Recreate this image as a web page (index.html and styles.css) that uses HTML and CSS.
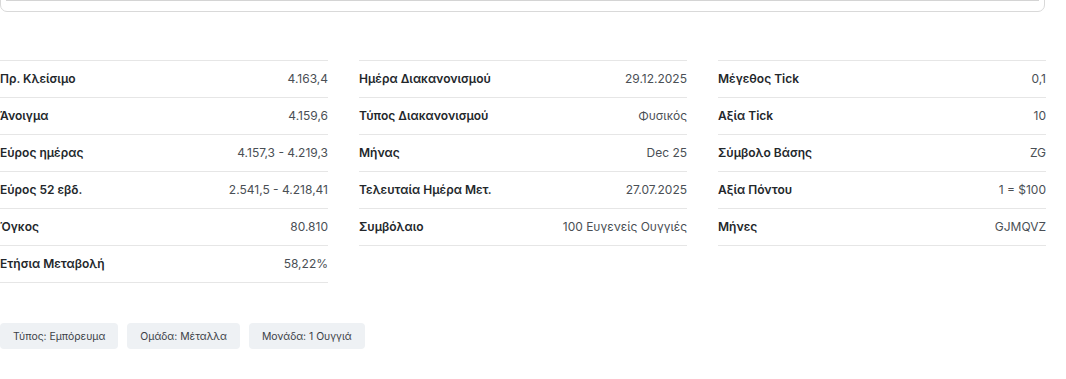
FILE: index.html
```html
<!DOCTYPE html>
<html lang="el">
<head>
<meta charset="utf-8">
<link rel="stylesheet" href="styles.css">
</head>
<body>
<div class="page">
  <div class="topbox"><div class="topinner"></div></div>
  <div class="grid">
    <div class="col">
      <div class="row"><span class="lbl">Πρ. Κλείσιμο</span><span class="val">4.163,4</span></div>
      <div class="row"><span class="lbl">Άνοιγμα</span><span class="val">4.159,6</span></div>
      <div class="row"><span class="lbl">Εύρος ημέρας</span><span class="val">4.157,3 - 4.219,3</span></div>
      <div class="row"><span class="lbl">Εύρος 52 εβδ.</span><span class="val">2.541,5 - 4.218,41</span></div>
      <div class="row"><span class="lbl">Όγκος</span><span class="val">80.810</span></div>
      <div class="row"><span class="lbl">Ετήσια Μεταβολή</span><span class="val">58,22%</span></div>
    </div>
    <div class="col">
      <div class="row"><span class="lbl">Ημέρα Διακανονισμού</span><span class="val">29.12.2025</span></div>
      <div class="row"><span class="lbl">Τύπος Διακανονισμού</span><span class="val">Φυσικός</span></div>
      <div class="row"><span class="lbl">Μήνας</span><span class="val">Dec 25</span></div>
      <div class="row"><span class="lbl">Τελευταία Ημέρα Μετ.</span><span class="val">27.07.2025</span></div>
      <div class="row"><span class="lbl">Συμβόλαιο</span><span class="val">100 Ευγενείς Ουγγιές</span></div>
    </div>
    <div class="col">
      <div class="row"><span class="lbl">Μέγεθος Tick</span><span class="val">0,1</span></div>
      <div class="row"><span class="lbl">Αξία Tick</span><span class="val">10</span></div>
      <div class="row"><span class="lbl">Σύμβολο Βάσης</span><span class="val">ZG</span></div>
      <div class="row"><span class="lbl">Αξία Πόντου</span><span class="val">1 = $100</span></div>
      <div class="row"><span class="lbl">Μήνες</span><span class="val">GJMQVZ</span></div>
    </div>
  </div>
  <div class="tags">
    <span class="tag">Τύπος: Εμπόρευμα</span>
    <span class="tag">Ομάδα: Μέταλλα</span>
    <span class="tag">Μονάδα: 1 Ουγγιά</span>
  </div>
</div>
</body>
</html>
```
FILE: styles.css
```css
* { box-sizing: border-box; }
html, body { margin: 0; padding: 0; background: #fff; }
body {
  font-family: Inter, "Noto Sans", "DejaVu Sans", sans-serif;
  color: #1f2328;
  overflow: hidden;
}
.page { width: 1046px; }
.topbox {
  margin-top: -40px;
  height: 52px;
  width: 1045px;
  border: 1px solid #d9d9d9;
  border-radius: 7px;
  padding: 0 5px;
}
.topinner {
  height: 40px;
  border-bottom: 1px solid #d4d4d4;
}
.grid {
  margin-top: 48px;
  display: grid;
  grid-template-columns: 328px 328px 328px;
  column-gap: 31px;
  align-items: start;
}
.col { border-top: 1px solid #e6e6e6; }
.row {
  height: 37px;
  padding-bottom: 2px;
  border-bottom: 1px solid #e6e6e6;
  display: flex;
  justify-content: space-between;
  align-items: center;
  font-size: 12px;
}
.lbl { font-weight: 600; color: #23272b; }
.val { color: #4a4f55; }
.tags {
  margin-top: 40px;
  display: flex;
  gap: 9px;
}
.tag {
  height: 26px;
  padding: 0 13px;
  background: #eef1f4;
  border-radius: 4px;
  font-size: 10.4px;
  color: #3c4147;
  display: flex;
  align-items: center;
}
```
